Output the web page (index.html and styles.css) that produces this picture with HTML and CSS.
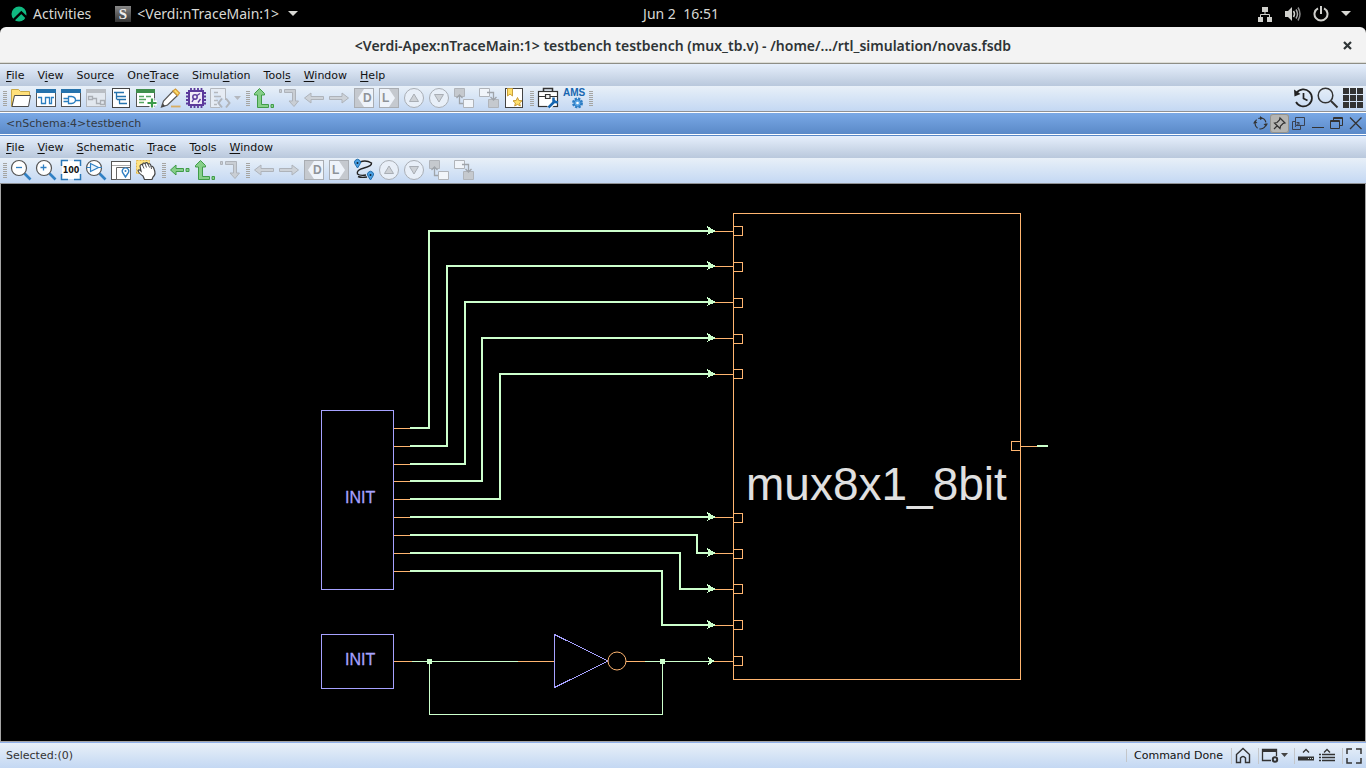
FILE: index.html
```html
<!DOCTYPE html>
<html lang="en">
<head>
<meta charset="utf-8">
<title>Verdi nTraceMain</title>
<link rel="stylesheet" href="styles.css">
</head>
<body>
<svg class="defs" aria-hidden="true">
  <defs>
    <linearGradient id="metal" x1="0" y1="0" x2="0" y2="1"><stop offset="0" stop-color="#888"/><stop offset="1" stop-color="#333"/></linearGradient>
    <symbol id="i-folder" viewBox="0 0 25 25"><path d="M2.500 20.500V3.500H9.500L11.500 5.500H20.500V10H6L2.500 20.500" fill="#ffe07a" stroke="#c9a948"/><path d="M5.500 9.500H21.500L19.500 20.500H3z" fill="#fff" stroke="#4a4a4a"/></symbol>
    <symbol id="i-wave" viewBox="0 0 25 25"><rect x="2.500" y="3.500" width="19" height="17" fill="#fff" stroke="#555"/><path d="M2 3H22V7H2z" fill="#2673ad"/><path d="M4 11.500H7.500V17.500H11.500V11.500H15.500V17.500H17.500V11.500H20" fill="none" stroke="#2b7fc0" stroke-width="1.300"/></symbol>
    <symbol id="i-gate" viewBox="0 0 25 25"><rect x="2.500" y="3.500" width="19" height="17" fill="#fff" stroke="#555"/><path d="M2 3H22V7H2z" fill="#2673ad"/><path d="M9.500 10.500H12.500Q16.500 11 16.500 14Q16.500 17 12.500 17.500H9.500zM4.500 12.500H9M4.500 15.500H9M16.500 14.500H21" fill="none" stroke="#2b7fc0" stroke-width="1.300"/></symbol>
    <symbol id="i-flow" viewBox="0 0 25 25"><rect x="2.500" y="3.500" width="19" height="17" fill="#e2e8ef" stroke="#b4b8be"/><path d="M2 3H22V7H2z" fill="#b9bec4"/><path d="M4.500 10.500H8.500V13.500H4.500zM16.500 14.500H20.500V18.500H16.500zM9 12.500H12.500V17.500H16" fill="none" stroke="#aaaeb4" stroke-width="1.300"/></symbol>
    <symbol id="i-lines" viewBox="0 0 25 25"><rect x="3.500" y="2.500" width="17" height="19" fill="#fff" stroke="#444"/><path d="M5 6.500H15M8 10.500H17M8 13.500H17M10 17.500H18M7.500 7V13.500M10.500 14V17.500" fill="none" stroke="#2673ad" stroke-width="1.300"/></symbol>
    <symbol id="i-listadd" viewBox="0 0 25 25"><rect x="2.500" y="3.500" width="18" height="17" fill="#fff" stroke="#555"/><path d="M2 3H21V7H2z" fill="#3f8f4c"/><path d="M5 10.500H10M5 13.500H12M5 16.500H10M12 10.500H17" stroke="#58a763" stroke-width="1.300"/><path d="M18 12V22M13 17H23" stroke="#fff" stroke-width="5"/><path d="M18 12.500V21.500M13.500 17H22.500" stroke="#3c9b4a" stroke-width="2.200"/></symbol>
    <symbol id="i-pencil" viewBox="0 0 25 25"><path d="M2.500 21L4.500 15L14 5L18.500 9.500L8.500 19z" fill="#fff" stroke="#555" stroke-width="1.200"/><path d="M14 5L16.500 3L20.500 7L18.500 9.500z" fill="#ffe06a" stroke="#d29a3a" stroke-width="1.200"/><path d="M2.500 21L6 20L4 17.500z" fill="#444"/><path d="M12 20.500H21.500" stroke="#d8ad62" stroke-width="1.800"/></symbol>
    <symbol id="i-chip" viewBox="0 0 25 25"><path d="M7 2V22M10.500 2V22M14 2V22M17.500 2V22M2 7H22M2 10.500H22M2 14H22M2 17.500H22" stroke="#5b3a9c" stroke-width="1.800"/><rect x="5" y="5" width="14" height="14" fill="#efeaf8" stroke="#5b3a9c" stroke-width="2"/><circle cx="11" cy="11" r="2.200" fill="none" stroke="#5b3a9c" stroke-width="1.500"/><path d="M13 9.500L16 7.500M8 16L10 12.500M14 16.500L16.500 13" stroke="#5b3a9c" stroke-width="1.400"/></symbol>
    <symbol id="i-doccode" viewBox="0 0 25 25"><path d="M1.500 2.500H16.500V14M11 21.500H1.500V2.500" fill="#e6ecf4" stroke="#b4b8be"/><path d="M5 6.500H9M5 10.500H12M5 14.500H9M5 18.500H8" stroke="#b4b8be" stroke-width="1.500"/><path d="M13 12.500L9.500 17L13 21.500M17 12.500L20.500 17L17 21.500" fill="none" stroke="#b0b4ba" stroke-width="2"/></symbol>
    <symbol id="i-up" viewBox="0 0 25 25"><path d="M5.500 21.500V9H2.500V7.500L7.500 2.500L12.500 7.500V9H9.500V18.500H16.500V21.500z" fill="#86cf89" stroke="#409c49"/><path d="M19 18.500H21.500V21.500H19z" fill="#86cf89" stroke="#409c49"/></symbol>
    <symbol id="i-down" viewBox="0 0 25 25"><path d="M7.500 3.500H18.500V15H21.500L17 20.500L12 15H15.500V6.500H7.500zM2.500 3.500H4.500V6.500H2.500z" fill="#c9ced4" stroke="#aeb3ba"/></symbol>
    <symbol id="i-gleft" viewBox="0 0 25 25"><path d="M2.500 12L8 7V10.500H15.500V13.500H8V17zM18 10.500H21V13.500H18z" fill="#86cf89" stroke="#409c49"/></symbol>
    <symbol id="i-left" viewBox="0 0 25 25"><path d="M2.500 12L9 7V10.500H21.500V13.500H9V17z" fill="#cdd2d8" stroke="#aeb3ba"/></symbol>
    <symbol id="i-right" viewBox="0 0 25 25"><path d="M21.500 12L15 7V10.500H2.500V13.500H15V17z" fill="#cdd2d8" stroke="#aeb3ba"/></symbol>
    <symbol id="i-d" viewBox="0 0 25 25"><rect x="2.500" y="2.500" width="19" height="19" fill="#c5c9cf" stroke="#a9adb3"/><path d="M21 3V21H12L6 12L12 3z" fill="#eef3fa"/><text x="11" y="16" class="letter">D</text></symbol>
    <symbol id="i-l" viewBox="0 0 25 25"><rect x="2.500" y="2.500" width="19" height="19" fill="#c5c9cf" stroke="#a9adb3"/><path d="M3 3H12L18 12L12 21H3z" fill="#eef3fa"/><text x="5" y="16" class="letter">L</text></symbol>
    <symbol id="i-cup" viewBox="0 0 25 25"><circle cx="12" cy="12" r="9.500" fill="#e8eff8" stroke="#a9aeb5"/><path d="M7.500 15.500L12 8L16.500 15.500z" fill="#cdd1d6" stroke="#a9aeb5"/></symbol>
    <symbol id="i-cdown" viewBox="0 0 25 25"><circle cx="12" cy="12" r="9.500" fill="#e8eff8" stroke="#a9aeb5"/><path d="M7.500 8.500L12 16L16.500 8.500z" fill="#cdd1d6" stroke="#a9aeb5"/></symbol>
    <symbol id="i-boxup" viewBox="0 0 25 25"><path d="M2.500 2.500H12.500V10.500H2.500z" fill="#c5c9ce" stroke="#b0b4ba"/><path d="M11.500 13.500H21.500V21.500H11.500z" fill="#f1f5fa" stroke="#b0b4ba"/><path d="M11 17.500H7.500V9M4.500 12L7.500 9L10.500 12" fill="none" stroke="#9fa4aa" stroke-width="1.300"/></symbol>
    <symbol id="i-boxdown" viewBox="0 0 25 25"><path d="M2.500 2.500H12.500V10.500H2.500z" fill="#f1f5fa" stroke="#b0b4ba"/><path d="M11.500 13.500H21.500V21.500H11.500z" fill="#c5c9ce" stroke="#b0b4ba"/><path d="M10 6.500H16.500V14M13.500 11L16.500 14L19.500 11" fill="none" stroke="#9fa4aa" stroke-width="1.300"/></symbol>
    <symbol id="i-bookmark" viewBox="0 0 25 25"><rect x="3.500" y="2.500" width="17" height="19" fill="#fff" stroke="#444"/><path d="M5.500 2.500H10.500V10L8 8L5.500 10z" fill="#ffe06a" stroke="#c9a03c"/><path d="M15.500 11.500L16.800 14.500L20 14.800L17.600 17L18.300 20L15.500 18.400L12.700 20L13.400 17L11 14.800L14.200 14.500z" fill="#ffe06a" stroke="#c99b34"/></symbol>
    <symbol id="i-case" viewBox="0 0 25 25"><path d="M7.500 6V2.500H16.500V6" fill="none" stroke="#333" stroke-width="1.500"/><rect x="2.500" y="5.500" width="19" height="15" fill="#fff" stroke="#333" stroke-width="1.200"/><path d="M3 10.500H9M14 10.500H21M9.500 8.500H14V12.500H9.500z" fill="#eee" stroke="#333" stroke-width="1.200"/><path d="M12.500 21.500L20 14" stroke="#fff" stroke-width="5"/><path d="M12.500 21.500L19.500 14.500M17.500 11.500V15.500L22 16.500" fill="none" stroke="#1766b0" stroke-width="2.500"/></symbol>
    <symbol id="i-ams" viewBox="0 0 25 25"><text x="2" y="10" class="ams">AMS</text><circle cx="16.500" cy="17" r="4.200" fill="none" stroke="#2b7cc4" stroke-width="2.500" stroke-dasharray="2.200 1.100"/><circle cx="16.500" cy="17" r="3.500" fill="#5ca6e4" stroke="#2b7cc4"/><circle cx="16.500" cy="17" r="1.300" fill="#fff"/></symbol>
    <symbol id="i-history" viewBox="0 0 25 25"><path d="M5.500 7A8.500 8.500 0 1 1 5 16M12.500 7V12.500L16.500 14.500" fill="none" stroke="#222" stroke-width="1.700"/><path d="M3 3.500L3.500 10.500L9.500 8z" fill="#222"/></symbol>
    <symbol id="i-search" viewBox="0 0 25 25"><circle cx="9.500" cy="9.500" r="7.300" fill="none" stroke="#333" stroke-width="1.500"/><path d="M15 15L21.500 21.500" stroke="#333" stroke-width="2"/></symbol>
    <symbol id="i-grid" viewBox="0 0 25 25"><path d="M2 2H8V8H2zM9 2H15V8H9zM16 2H22V8H16zM2 9H8V15H2zM9 9H15V15H9zM16 9H22V15H16zM2 16H8V22H2zM9 16H15V22H9zM16 16H22V22H16z" fill="#333"/></symbol>
    <symbol id="i-zoomout" viewBox="0 0 25 25"><path d="M15.500 15.500L21.500 21.500" stroke="#3281c4" stroke-width="2.600"/><circle cx="10" cy="10" r="7.500" fill="#fff" stroke="#555" stroke-width="1.200"/><path d="M7 9.500H13" stroke="#3281c4" stroke-width="1.300"/></symbol>
    <symbol id="i-zoomin" viewBox="0 0 25 25"><path d="M15.500 15.500L21.500 21.500" stroke="#3281c4" stroke-width="2.600"/><circle cx="10" cy="10" r="7.500" fill="#fff" stroke="#555" stroke-width="1.200"/><path d="M6.500 9.500H12.500M9.500 6.500V12.500" stroke="#3281c4" stroke-width="1.300"/></symbol>
    <symbol id="i-zoomtri" viewBox="0 0 25 25"><path d="M15.500 15.500L21.500 21.500" stroke="#3281c4" stroke-width="2.600"/><circle cx="10" cy="10" r="7.500" fill="#fff" stroke="#555" stroke-width="1.200"/><path d="M6.500 5.500L14.500 9.500L6.500 13.500zM2.500 9.500H6M14.500 9.500H18" fill="#e8f3fc" stroke="#3281c4" stroke-width="1.200"/></symbol>
    <symbol id="i-100" viewBox="0 0 25 25"><path d="M3 3H21V21H3z" fill="#fff"/><path d="M2.500 8V2.500H9M15 2.500H21.500V8M21.500 16V21.500H15M9 21.500H2.500V16" fill="none" stroke="#2b78b8" stroke-width="1.500"/><text x="12" y="15" class="hundred">100</text></symbol>
    <symbol id="i-map" viewBox="0 0 25 25"><rect x="2.500" y="3.500" width="19" height="18" fill="#fff" stroke="#555"/><path d="M3 7.500H21" stroke="#aaa"/><path d="M7.500 21.500V9.500H21.500V21.500z" fill="#fff" stroke="#666"/><path d="M16.500 19L13.500 14.500A3.300 3.300 0 1 1 19.500 14.500z" fill="#fff" stroke="#3281c4" stroke-width="1.400"/><circle cx="16.500" cy="13" r="1" fill="#3281c4"/></symbol>
    <symbol id="i-hand" viewBox="0 0 25 25"><rect x="2.500" y="2.500" width="13" height="13" fill="#ffe484" stroke="#e6b848" stroke-dasharray="2 1"/><path d="M10.500 21.500L9 18Q4.500 15 4 12.500Q5 11 7 13L6 8Q7 5.500 8.500 7Q9 4 11 5.500Q13 3.500 14 6Q16.500 5 17 8Q19.500 8 20 11Q22.500 16 19 19L18 21.500z" fill="#fff" stroke="#444" stroke-width="1.200"/><path d="M8.500 7L10 10.500M11 5.500L12.500 9.500M14 6L15.500 9.500M17 8L17.500 11" stroke="#555"/></symbol>
    <symbol id="i-route" viewBox="0 0 25 25"><path d="M8 4Q14 1.500 19.500 5Q20 8 12 10Q4 12 5.500 16Q8 18 14 17M6 18.500Q9 20 15 19" fill="none" stroke="#222" stroke-width="1.400"/><path d="M5.500 10L3 6A3 3 0 1 1 8 6zM18.500 22L16 18A3 3 0 1 1 21 18z" fill="#4aa0e4" stroke="#1f6dae"/><circle cx="5.500" cy="5" r="1" fill="#123"/><circle cx="18.500" cy="17" r="1" fill="#123"/></symbol>
    <symbol id="pin" viewBox="0 0 10 10"><rect x=".5" y=".5" width="9" height="9" fill="none" stroke="#ffb570"/></symbol>
  </defs>
</svg>

<header class="topbar">
  <div class="top-left">
    <button class="top-item activities"><svg width="16" height="16" viewBox="0 0 16 16"><circle cx="8" cy="8" r="7.500" fill="#10b981"/><path d="M1 15.500L10.300 6.500L17 13" fill="none" stroke="#000" stroke-width="2.400"/></svg>Activities</button>
    <button class="top-item"><svg width="16" height="16" viewBox="0 0 16 16"><rect width="16" height="16" fill="url(#metal)"/><text x="8" y="13" class="s-logo">S</text></svg>&lt;Verdi:nTraceMain:1&gt;<svg width="10" height="5" viewBox="0 0 10 5"><path d="M0 0H10L5 5z" fill="#d8d8d4"/></svg></button>
  </div>
  <button class="top-item clock">Jun 2&nbsp; 16:51</button>
  <button class="top-item tray" aria-label="System menu">
    <svg width="16" height="16" viewBox="0 0 16 16"><path d="M5 1H11V6H5zM1 11H6V16H1zM10 11H15V16H10z" fill="#d0d0cc"/><path d="M8 6V9M3.500 11V8.500H12.500V11" fill="none" stroke="#d0d0cc"/></svg>
    <svg width="16" height="16" viewBox="0 0 16 16"><path d="M0 5H3L7 1V15L3 11H0z" fill="#d0d0cc"/><path d="M8.500 5Q10.500 8 8.500 11" fill="none" stroke="#d0d0cc" stroke-width="1.500"/><path d="M11 3.500Q14 8 11 12.500" fill="none" stroke="#aaa" stroke-width="1.500"/><path d="M13 1.500Q17 8 13 14.500" fill="none" stroke="#888" stroke-width="1.500"/></svg>
    <svg width="16" height="16" viewBox="0 0 16 16"><path d="M5 2.300A6.500 6.500 0 1 0 11 2.300M8 0V8" fill="none" stroke="#d0d0cc" stroke-width="2"/></svg>
    <svg width="10" height="5" viewBox="0 0 10 5"><path d="M0 0H10L5 5z" fill="#d8d8d4"/></svg>
  </button>
</header>

<main class="window">
  <div class="titlebar">
    <h1>&lt;Verdi-Apex:nTraceMain:1&gt; testbench testbench (mux_tb.v) - /home/.../rtl_simulation/novas.fsdb</h1>
    <button class="close" aria-label="Close"><svg width="9" height="9" viewBox="0 0 9 9"><path d="M1 1L8 8M8 1L1 8" stroke="#2e3436" stroke-width="2.200"/></svg></button>
  </div>

  <nav class="menubar">
    <button><u>F</u>ile</button><button>V<u>i</u>ew</button><button>Sou<u>r</u>ce</button><button>One<u>T</u>race</button><button>Simul<u>a</u>tion</button><button>Tool<u>s</u></button><button><u>W</u>indow</button><button><u>H</u>elp</button>
  </nav>
  <div class="toolbar">
    <i class="grip"></i>
    <button aria-label="Open"><svg><use href="#i-folder"/></svg></button>
    <button aria-label="New waveform"><svg><use href="#i-wave"/></svg></button>
    <button aria-label="New schematic"><svg><use href="#i-gate"/></svg></button>
    <button aria-label="New flow view" disabled><svg><use href="#i-flow"/></svg></button>
    <button aria-label="Hierarchy"><svg><use href="#i-lines"/></svg></button>
    <button aria-label="Add list"><svg><use href="#i-listadd"/></svg></button>
    <button aria-label="Edit"><svg><use href="#i-pencil"/></svg></button>
    <button aria-label="Design"><svg><use href="#i-chip"/></svg></button>
    <button aria-label="Source code" disabled><svg><use href="#i-doccode"/></svg></button>
    <button class="drop" aria-label="Source code options" disabled><svg viewBox="0 0 9 25"><path d="M0 10H7L3.500 14z" fill="#b4b8be"/></svg></button>
    <i class="grip"></i>
    <button aria-label="Scope up"><svg><use href="#i-up"/></svg></button>
    <button aria-label="Scope down" disabled><svg><use href="#i-down"/></svg></button>
    <button aria-label="Back" disabled><svg><use href="#i-left"/></svg></button>
    <button aria-label="Forward" disabled><svg><use href="#i-right"/></svg></button>
    <button aria-label="Driver" disabled><svg><use href="#i-d"/></svg></button>
    <button aria-label="Load" disabled><svg><use href="#i-l"/></svg></button>
    <button aria-label="Previous" disabled><svg><use href="#i-cup"/></svg></button>
    <button aria-label="Next" disabled><svg><use href="#i-cdown"/></svg></button>
    <button aria-label="Show calling" disabled><svg><use href="#i-boxup"/></svg></button>
    <button aria-label="Show definition" disabled><svg><use href="#i-boxdown"/></svg></button>
    <button aria-label="Bookmarks"><svg><use href="#i-bookmark"/></svg></button>
    <i class="grip"></i>
    <button aria-label="Toolbox"><svg><use href="#i-case"/></svg></button>
    <button aria-label="AMS settings"><svg><use href="#i-ams"/></svg></button>
    <i class="grip"></i>
    <span class="spacer"></span>
    <button aria-label="History"><svg><use href="#i-history"/></svg></button>
    <button aria-label="Search"><svg><use href="#i-search"/></svg></button>
    <button aria-label="Applications"><svg><use href="#i-grid"/></svg></button>
  </div>

  <section class="panel">
    <div class="panel-title">
      <h2>&lt;nSchema:4&gt;testbench</h2>
      <button aria-label="Refresh"><svg viewBox="0 0 19 19"><circle cx="9.500" cy="9.500" r="5.500" fill="none" stroke="#333" stroke-width="1.200" stroke-dasharray="9.500 2"/><path d="M2 9.500L4 6.500L6.500 9zM17 9.500L15 12.500L12.500 10zM9 2L12 4.500L9 6z" fill="#333"/></svg></button>
      <button class="pinned" aria-label="Pin"><svg viewBox="0 0 19 19"><path d="M4 15L7.500 11.500M10 4L15 9L13 9.500L10.500 12L10 14.500L4.500 9L7 8.500L9.500 6z" fill="none" stroke="#333" stroke-width="1.200"/></svg></button>
      <button aria-label="Undock"><svg viewBox="0 0 19 19"><path d="M6.500 3.500H15.500V11.500H6.500zM6 7.500H3.500V15.500H11.500V12M6 13L10 8.500M7.500 8.500H10V11" fill="none" stroke="#3a4252"/></svg></button>
      <button aria-label="Minimize"><svg viewBox="0 0 19 19"><path d="M4 13.500H16" stroke="#333"/></svg></button>
      <button aria-label="Restore"><svg viewBox="0 0 19 19"><path d="M3.500 6.500H12.500V14.500H3.500zM6.500 6V3.500H15.500V11.500H13M3.500 7.500H12.500M6.500 4.500H15.500" fill="none" stroke="#333"/></svg></button>
      <button aria-label="Close panel"><svg viewBox="0 0 19 19"><path d="M4 3.500L15.500 15M15.500 3.500L4 15" stroke="#333" stroke-width="1.300"/></svg></button>
    </div>
    <nav class="menubar">
      <button><u>F</u>ile</button><button><u>V</u>iew</button><button><u>S</u>chematic</button><button><u>T</u>race</button><button>T<u>o</u>ols</button><button><u>W</u>indow</button>
    </nav>
    <div class="toolbar">
      <i class="grip"></i>
      <button aria-label="Zoom out"><svg><use href="#i-zoomout"/></svg></button>
      <button aria-label="Zoom in"><svg><use href="#i-zoomin"/></svg></button>
      <button aria-label="Zoom 100%"><svg><use href="#i-100"/></svg></button>
      <button aria-label="Zoom to selection"><svg><use href="#i-zoomtri"/></svg></button>
      <button aria-label="Overview"><svg><use href="#i-map"/></svg></button>
      <button aria-label="Pan"><svg><use href="#i-hand"/></svg></button>
      <i class="grip"></i>
      <button aria-label="Last view"><svg><use href="#i-gleft"/></svg></button>
      <button aria-label="Pop view up"><svg><use href="#i-up"/></svg></button>
      <button aria-label="Push view in" disabled><svg><use href="#i-down"/></svg></button>
      <i class="grip"></i>
      <button aria-label="Back" disabled><svg><use href="#i-left"/></svg></button>
      <button aria-label="Forward" disabled><svg><use href="#i-right"/></svg></button>
      <button aria-label="Driver" disabled><svg><use href="#i-d"/></svg></button>
      <button aria-label="Load" disabled><svg><use href="#i-l"/></svg></button>
      <button aria-label="Trace two points"><svg><use href="#i-route"/></svg></button>
      <button aria-label="Previous" disabled><svg><use href="#i-cup"/></svg></button>
      <button aria-label="Next" disabled><svg><use href="#i-cdown"/></svg></button>
      <button aria-label="Show calling" disabled><svg><use href="#i-boxup"/></svg></button>
      <button aria-label="Show definition" disabled><svg><use href="#i-boxdown"/></svg></button>
    </div>
    <div class="canvas">
      <svg class="schematic" viewBox="1 184 1364 557" role="img" aria-label="testbench schematic">
        <defs>
          <path id="arrow" d="M-9-5L0 0L-9 4L-7.500 0z"/>
        </defs>
        <g class="port">
          <path d="M394 428.500H411M394 446.500H411M394 464.500H411M394 481.500H411M394 499.500H411M394 517.500H411M394 535.500H411M394 553.500H411M394 571.500H411"/>
          <path d="M715 231.500H733M715 266.500H733M715 302.500H733M715 338.500H733M715 374.500H733M715 517.500H733M715 553.500H733M715 589.500H733M715 625.500H733M714 661.500H733M1021 446.500H1038"/>
          <path d="M394 661.500H412M518 661.500H554M626 661.500H645"/>
          <rect x="733.500" y="213.500" width="287" height="466"/>
        </g>
        <g class="cell">
          <rect x="321.500" y="410.500" width="72" height="179"/>
          <rect x="321.500" y="634.500" width="72" height="54"/>
          <path d="M554.500 634.500V687.500L608 661z"/>
        </g>
        <circle class="bubble" cx="617" cy="661" r="9"/>
        <g class="pins">
          <use href="#pin" x="733" y="226" width="10" height="10"/>
          <use href="#pin" x="733" y="262" width="10" height="10"/>
          <use href="#pin" x="733" y="298" width="10" height="10"/>
          <use href="#pin" x="733" y="334" width="10" height="10"/>
          <use href="#pin" x="733" y="369" width="10" height="10"/>
          <use href="#pin" x="733" y="513" width="10" height="10"/>
          <use href="#pin" x="733" y="549" width="10" height="10"/>
          <use href="#pin" x="733" y="584" width="10" height="10"/>
          <use href="#pin" x="733" y="620" width="10" height="10"/>
          <use href="#pin" x="733" y="656" width="10" height="10"/>
          <use href="#pin" x="1011" y="441" width="10" height="10"/>
        </g>
        <g class="bus">
          <path d="M410 428H429V231H709"/>
          <path d="M410 446H447V266H709"/>
          <path d="M410 464H465V302H709"/>
          <path d="M410 481H482V338H709"/>
          <path d="M410 499H500V374H709"/>
          <path d="M410 517H709"/>
          <path d="M410 535H697V553H709"/>
          <path d="M410 553H680V589H709"/>
          <path d="M410 571H662V625H709"/>
          <path d="M1037 446H1048"/>
        </g>
        <path class="wire" d="M412 661.500H518M645 661.500H709M429.500 661.500V714.500H662.500V661.500"/>
        <g class="tips">
          <use href="#arrow" x="716" y="231"/><use href="#arrow" x="716" y="266"/><use href="#arrow" x="716" y="302"/><use href="#arrow" x="716" y="338"/><use href="#arrow" x="716" y="374"/><use href="#arrow" x="716" y="517"/><use href="#arrow" x="716" y="553"/><use href="#arrow" x="716" y="589"/><use href="#arrow" x="716" y="625"/>
          <path d="M708 657L715 661L708 665L709 661z"/>
          <rect x="427" y="659" width="5" height="5"/><rect x="660" y="659" width="5" height="5"/>
        </g>
        <text class="cell-name" x="345" y="503">INIT</text>
        <text class="cell-name" x="345" y="665">INIT</text>
        <text class="block-name" x="746" y="500">mux8x1_8bit</text>
      </svg>
    </div>
  </section>

  <footer class="statusbar">
    <span class="selected">Selected:(0)</span>
    <span class="message">Command Done</span>
    <button class="home" aria-label="Home"><svg width="16" height="17" viewBox="0 0 16 17"><path d="M1.500 7.500L8 1.500L14.500 7.500V15.500H10.500V11Q8 8 5.500 11V15.500H1.500z" fill="none" stroke="#333" stroke-width="1.400"/></svg></button>
    <button class="layout" aria-label="Layout settings"><svg width="28" height="17" viewBox="0 0 28 17"><path d="M10 13.500H1.500V2.500H15.500V9" fill="none" stroke="#333" stroke-width="1.300"/><path d="M1 2H16V5H1z" fill="#333"/><circle cx="14" cy="12.500" r="2.200" fill="none" stroke="#333" stroke-width="2"/><path d="M20 6H27L23.500 10z" fill="#444"/></svg></button>
    <button class="views" aria-label="Collapse messages"><svg width="16" height="17" viewBox="0 0 16 17"><path d="M5 5.500L8 2.500L11 5.500" fill="none" stroke="#333" stroke-width="1.300"/><path d="M0 9.500H16V13.500H0z" fill="#333"/><path d="M10 11.500H15" stroke="#cdd" stroke-dasharray="1 1"/></svg></button>
    <button class="views-more" aria-label="Expand messages"><svg width="16" height="17" viewBox="0 0 16 17"><path d="M5 5.500L8 2.500L11 5.500" fill="none" stroke="#333" stroke-width="1.300"/><path d="M0 7.500H2M3 7.500H16M0 10.500H2M3 10.500H16M0 13.500H2M3 13.500H16" stroke="#333" stroke-width="1.500"/></svg></button>
    <button class="full" aria-label="Full screen"><svg width="16" height="16" viewBox="0 0 16 16"><path d="M1 6V1H6M10 1H15V6M15 10V15H10M6 15H1V10" fill="none" stroke="#333" stroke-width="1.500"/></svg></button>
  </footer>
</main>
</body>
</html>
```

FILE: styles.css
```css
* { box-sizing: border-box; }

body {
  margin: 0;
  height: 100vh;
  display: flex;
  flex-direction: column;
  background: #000;
  font-family: "DejaVu Sans", sans-serif;
  font-size: 11px;
  color: #111;
}

button {
  margin: 0;
  padding: 0;
  border: 0;
  background: none;
  font: inherit;
  color: inherit;
}

svg { display: block; flex: none; }
.defs { position: absolute; width: 0; height: 0; }

/* Desktop bar */
.topbar {
  display: grid;
  grid-template-columns: 1fr auto 1fr;
  align-items: center;
  height: 27px;
  flex: none;
  padding: 0 15px 0 11px;
  color: #d8d8d4;
  font: 14px "Noto Sans", sans-serif;
}
.top-left { display: flex; gap: 24px; }
.top-item { display: flex; align-items: center; gap: 6px; white-space: nowrap; }
.top-item svg:last-child:not(:first-child) { margin-left: 3px; }
.tray { justify-self: end; gap: 12px; }
.tray svg:last-child:not(:first-child) { margin-left: 0; }
.s-logo { font: bold 15px "Liberation Serif", serif; text-anchor: middle; fill: #eee; }

/* Application window */
.window { flex: 1; min-height: 0; display: flex; flex-direction: column; }

.titlebar {
  display: grid;
  grid-template-columns: 1fr auto 1fr;
  align-items: center;
  height: 37px;
  flex: none;
  padding: 0 14px;
  background: #f3f3f3;
  border-bottom: 1px solid #8e8e86;
  box-shadow: inset 0 -1px #dcdcd6;
  border-radius: 6px 6px 0 0;
}
.titlebar h1 {
  grid-column: 2;
  margin: 0;
  font: 600 14px "Noto Sans", sans-serif;
  color: #2e3436;
  white-space: nowrap;
}
.close { justify-self: end; }

.menubar {
  display: flex;
  gap: 1px;
  height: 22px;
  flex: none;
  background: linear-gradient(#e6effc, #b9c8dc);
}
.menubar button { padding: 0 6px; }
.menubar u { text-underline-offset: 2px; text-decoration-thickness: 1px; }

.toolbar {
  display: flex;
  height: 26px;
  flex: none;
  background: linear-gradient(#e8f0f8, #c4d8f3);
  border-bottom: 1px solid #8f9194;
}
.toolbar button { width: 25px; height: 25px; }
.toolbar svg { width: 25px; height: 25px; }
.toolbar .drop, .toolbar .drop svg { width: 9px; }
.grip {
  width: 4px;
  height: 15px;
  margin: 5px 2px 0 3px;
  background: repeating-linear-gradient(#a5a5a2 0 1px, transparent 1px 2px);
}
.spacer { flex: 1; }

.letter { font: bold 12px "Liberation Sans", sans-serif; fill: #8e9399; }
.ams { font: bold 10px "Liberation Sans", sans-serif; fill: #1766b0; }
.hundred { font: bold 8px "DejaVu Sans", sans-serif; fill: #111; text-anchor: middle; }

/* Schematic panel */
.panel { flex: 1; min-height: 0; display: flex; flex-direction: column; }
.panel-title {
  display: flex;
  align-items: center;
  height: 23px;
  flex: none;
  padding: 0 1px 0 6px;
  background: linear-gradient(#7aa9e6, #5a89c8) padding-box;
  border-top: 1px solid #fff;
  border-bottom: 1px solid #fff;
  color: #333a44;
}
.panel-title h2 { flex: 1; margin: 0; font: inherit; }
.panel-title button, .panel-title svg { width: 19px; height: 19px; }
.panel-title .pinned { background: #b5b5b2; border-radius: 3px; box-shadow: inset 0 0 0 1px #92928e; }
.panel-title + .menubar { height: 23px; border-top: 1px solid #5a89c8; }

.canvas {
  flex: 1;
  min-height: 0;
  background: #000;
  border: solid #a5a5a5;
  border-width: 0 1px 1px;
}
.schematic { width: 100%; height: 100%; shape-rendering: crispEdges; }
.cell { fill: none; stroke: #a6a2ff; }
.port { fill: none; stroke: #ffb570; }
.bubble { fill: none; stroke: #ffb570; shape-rendering: auto; }
.bus { fill: none; stroke: #ccffcc; stroke-width: 2; }
.wire { fill: none; stroke: #ccffcc; }
.tips { fill: #ccffcc; }
.cell-name { font: 16px "Liberation Sans", sans-serif; fill: #a6a2ff; stroke: #a6a2ff; stroke-width: .3; }
.block-name { font: 46px "Liberation Sans", sans-serif; fill: #e0e0e0; }

/* Status bar */
.statusbar {
  display: flex;
  align-items: center;
  height: 26px;
  flex: none;
  padding: 0 4px 0 6px;
  background: linear-gradient(#e8f0f8, #c4d8f3);
  border-top: 1px solid #8fb0ea;
}
.selected { flex: 1; color: #333; }
.message, .home, .layout, .views, .full { border-left: 1px solid #c3c6ca; }
.message { padding: 0 8px 0 7px; }
.home { padding: 0 7px 0 3px; }
.home, .layout, .views, .full { height: 16px; display: flex; align-items: center; }
.layout { padding: 0 5px 0 2px; }
.views { padding: 0 5px 0 3px; }
.views-more { margin-right: 7px; }
.full { padding-left: 3px; }
```
